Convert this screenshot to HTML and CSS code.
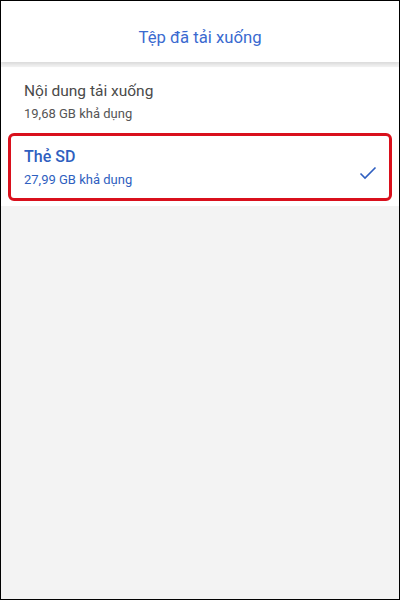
FILE: index.html
```html
<!DOCTYPE html>
<html lang="vi">
<head>
    <meta charset="UTF-8">
    <meta name="viewport" content="width=device-width, initial-scale=1.0">
    <title>Tệp đã tải xuống</title>
    <link rel="stylesheet" href="styles.css">
</head>
<body>

<div class="screen">
    <div class="header">
        <h2>Tệp đã tải xuống</h2>
    </div>

    <div class="list">
        <div class="item">
            <div class="item-text">
                <div class="item-title">Nội dung tải xuống</div>
                <div class="item-sub">19,68 GB khả dụng</div>
            </div>
        </div>
        <div class="item selected">
            <div class="item-text">
                <div class="item-title">Thẻ SD</div>
                <div class="item-sub">27,99 GB khả dụng</div>
            </div>
            <svg class="check" width="18" height="14" viewBox="0 0 18 14">
                <polyline points="1.5,7.5 6,12 16.5,1.5" fill="none" stroke="#2f5fc0" stroke-width="1.6"/>
            </svg>
        </div>
    </div>
</div>

</body>
</html>
```

FILE: styles.css
```css
body {
    margin: 0;
    font-family: Roboto, "Noto Sans", sans-serif;
}
.screen {
    width: 400px;
    height: 600px;
    box-sizing: border-box;
    border: 1px solid #000;
    background-color: #f3f3f3;
    overflow: hidden;
}
.header {
    height: 61px;
    background-color: #fff;
    display: flex;
    align-items: center;
    justify-content: center;
    box-shadow: 0 2px 4px rgba(0, 0, 0, 0.12);
    position: relative;
}
.header h2 {
    margin: 0;
    font-size: 16.7px;
    font-weight: normal;
    color: #3a6ad0;
    padding-top: 12px;
}
.list {
    margin-top: 5px;
    background-color: #fff;
    padding: 0 7px 5px;
}
.item {
    display: flex;
    align-items: center;
    padding: 13px 16px 10px;
}
.item-title {
    font-size: 15.5px;
    line-height: 22px;
    color: #4a4a4a;
}
.item-sub {
    font-size: 13px;
    line-height: 18px;
    color: #555;
    margin-top: 3px;
}
.item-text {
    flex: 1;
}
.selected {
    border: 3px solid #d9101c;
    border-radius: 6px;
    padding: 10px 12px 9px 13px;
}
.selected .item-title {
    color: #2f5fc0;
    font-weight: 500;
    font-size: 16px;
}
.selected .item-sub {
    color: #2f5fc0;
}
.check {
    margin-top: 10px;
}
```
